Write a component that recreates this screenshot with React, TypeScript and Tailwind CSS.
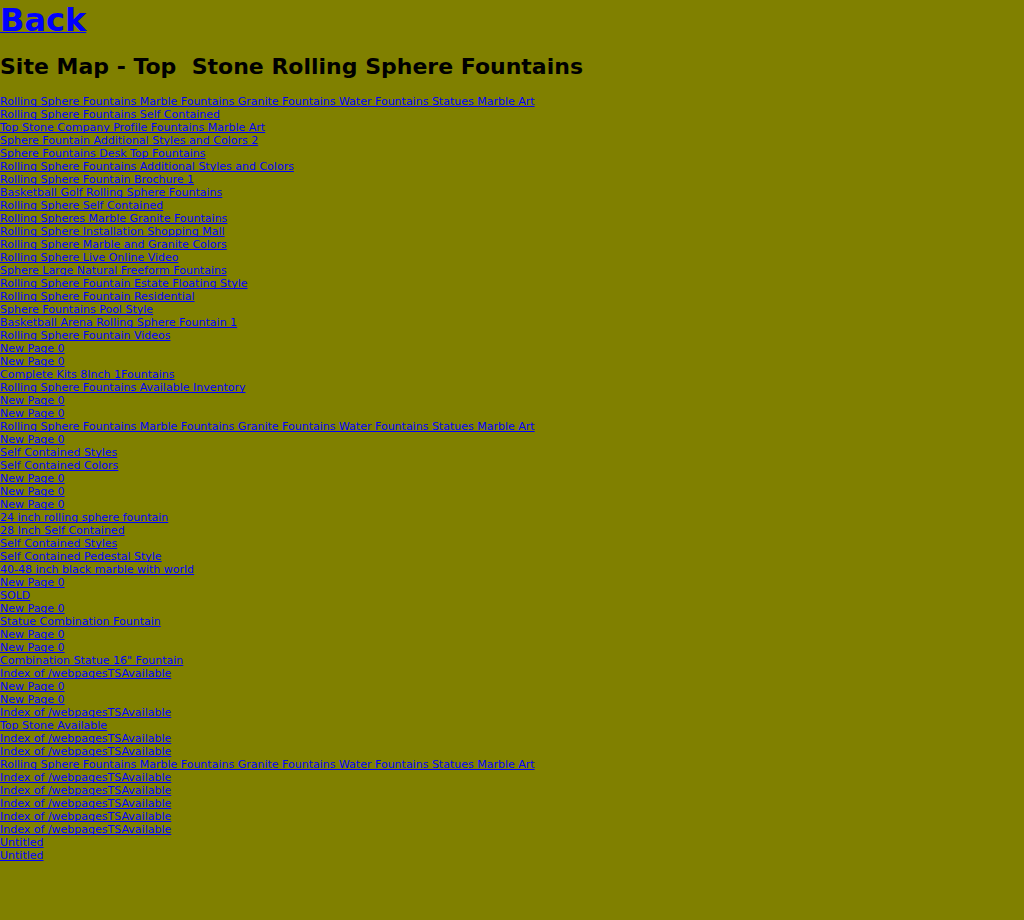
const links = [
  'Rolling Sphere Fountains Marble Fountains Granite Fountains Water Fountains Statues Marble Art',
  'Rolling Sphere Fountains Self Contained',
  'Top Stone Company Profile Fountains Marble Art',
  'Sphere Fountain Additional Styles and Colors 2',
  'Sphere Fountains Desk Top Fountains',
  'Rolling Sphere Fountains Additional Styles and Colors',
  'Rolling Sphere Fountain Brochure 1',
  'Basketball Golf Rolling Sphere Fountains',
  'Rolling Sphere Self Contained',
  'Rolling Spheres Marble Granite Fountains',
  'Rolling Sphere Installation Shopping Mall',
  'Rolling Sphere Marble and Granite Colors',
  'Rolling Sphere Live Online Video',
  'Sphere Large Natural Freeform Fountains',
  'Rolling Sphere Fountain Estate Floating Style',
  'Rolling Sphere Fountain Residential',
  'Sphere Fountains Pool Style',
  'Basketball Arena Rolling Sphere Fountain 1',
  'Rolling Sphere Fountain Videos',
  'New Page 0',
  'New Page 0',
  'Complete Kits 8Inch 1Fountains',
  'Rolling Sphere Fountains Available Inventory',
  'New Page 0',
  'New Page 0',
  'Rolling Sphere Fountains Marble Fountains Granite Fountains Water Fountains Statues Marble Art',
  'New Page 0',
  'Self Contained Styles',
  'Self Contained Colors',
  'New Page 0',
  'New Page 0',
  'New Page 0',
  '24 inch rolling sphere fountain',
  '28 Inch Self Contained',
  'Self Contained Styles',
  'Self Contained Pedestal Style',
  '40-48 inch black marble with world',
  'New Page 0',
  'SOLD',
  'New Page 0',
  'Statue Combination Fountain',
  'New Page 0',
  'New Page 0',
  'Combination Statue 16" Fountain',
  'Index of /webpagesTSAvailable',
  'New Page 0',
  'New Page 0',
  'Index of /webpagesTSAvailable',
  'Top Stone Available',
  'Index of /webpagesTSAvailable',
  'Index of /webpagesTSAvailable',
  'Rolling Sphere Fountains Marble Fountains Granite Fountains Water Fountains Statues Marble Art',
  'Index of /webpagesTSAvailable',
  'Index of /webpagesTSAvailable',
  'Index of /webpagesTSAvailable',
  'Index of /webpagesTSAvailable',
  'Index of /webpagesTSAvailable',
  'Untitled',
  'Untitled',
];

export default function App() {
  return (
    <main className="min-h-screen bg-[#808000] pb-10 font-[Verdana,'DejaVu_Sans',sans-serif] text-black [font-variant-ligatures:none] [text-decoration-skip-ink:none]">
      <h1 className="text-[32px] leading-10 font-bold">
        <a href="#back" className="text-[#0000ff] underline decoration-1 underline-offset-1">Back</a>
      </h1>
      <h2 className="mt-[11px] text-[22px] leading-8 font-bold">
        {'Site Map - Top\u00a0 Stone Rolling Sphere Fountains'}
      </h2>
      <ul className="mt-3 text-[11px] leading-[13px]">
        {links.map((label, index) => (
          <li key={index}>
            <a href={`#page-${index + 1}`} className="text-[#0000ff] underline decoration-1 underline-offset-1">{label}</a>
          </li>
        ))}
      </ul>
    </main>
  );
}
